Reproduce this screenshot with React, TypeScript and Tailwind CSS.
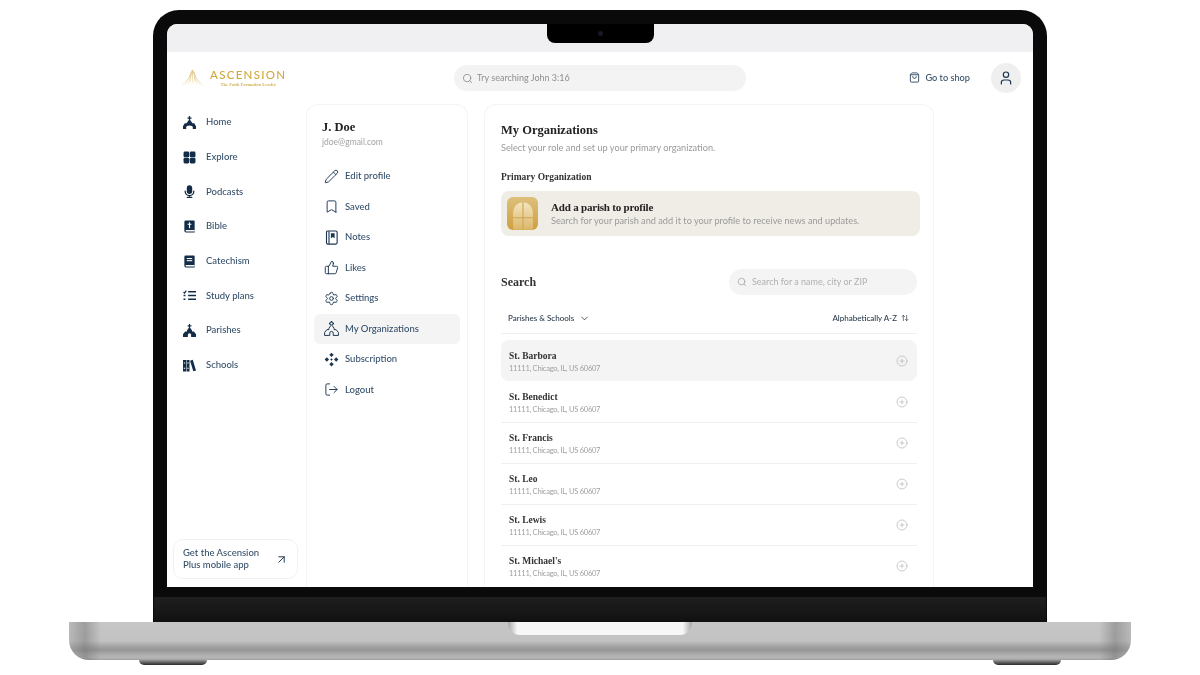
import React from 'react';
import { ArrowUpDown, ArrowUpRight, Bookmark, ChevronDown, CirclePlus, LogOut, Pencil, Search, Settings, ShoppingBag, ThumbsUp, User } from 'lucide-react';

type IconProps = { className?: string };

const churchPath = 'M10.900 0h2.200v2.400h2.400v2.100h-2.400V7l3.400 4.500V14h3.500l4 5v5h-9v-4a3 3 0 0 0-6 0v4H0v-5l4-5h3.500v-2.500L10.900 7V4.500H8.500V2.400h2.400z';

const HomeIcon = ({ className }: IconProps) => (
    <svg viewBox="0 0 24 24" fill="currentColor" className={className}>
        <path d="M10.800 0h2.400v2.600h2.600v2.300h-2.600v2.400l4.300 6.200h3.200l3.300 5.200V24h-6v-3.600a2.100 2.100 0 0 0-1.600-2.100L12 17.700l-4.400.6A2.100 2.100 0 0 0 6 20.400V24H0v-5.300l3.300-5.200h3.200l4.300-6.200V4.900H8.200V2.600h2.600z" />
    </svg>
);

const GridIcon = ({ className }: IconProps) => (
    <svg viewBox="0 0 24 24" fill="currentColor" className={className}>
        <rect x="1" y="1" width="10.500" height="10.500" rx="2.500" />
        <rect x="12.500" y="1" width="10.500" height="10.500" rx="2.500" />
        <rect x="1" y="12.500" width="10.500" height="10.500" rx="2.500" />
        <rect x="12.500" y="12.500" width="10.500" height="10.500" rx="2.500" />
    </svg>
);

const MicIcon = ({ className }: IconProps) => (
    <svg viewBox="0 0 24 24" className={className}>
        <rect x="7" y="0.500" width="10" height="16" rx="5" fill="currentColor" />
        <path d="M4 11.500a8 8 0 0 0 16 0M12 19.500V23M8 23h8" fill="none" stroke="currentColor" strokeWidth="2.400" strokeLinecap="round" />
    </svg>
);

const BibleIcon = ({ className }: IconProps) => (
    <svg viewBox="0 0 24 24" className={className}>
        <path d="M5 1h15a1.500 1.500 0 0 1 1.500 1.500V23H5.500A3 3 0 0 1 2.500 20V3.500A2.500 2.500 0 0 1 5 1z" fill="currentColor" />
        <path d="M6 18.500h15.500V21H6a1.250 1.250 0 0 1 0-2.500z" fill="#fff" />
        <path d="M11 4h2v2.800h2.500v2H13V15h-2V8.800H8.500v-2H11z" fill="#fff" />
    </svg>
);

const CatechismIcon = ({ className }: IconProps) => (
    <svg viewBox="0 0 24 24" className={className}>
        <path d="M5 1h15a1.500 1.500 0 0 1 1.500 1.500V23H5.500A3 3 0 0 1 2.500 20V3.500A2.500 2.500 0 0 1 5 1z" fill="currentColor" />
        <path d="M6 18.500h15.500V21H6a1.250 1.250 0 0 1 0-2.500z" fill="#fff" />
        <rect x="7" y="5.500" width="10" height="2" fill="#fff" />
        <rect x="7" y="9.500" width="10" height="2" fill="#fff" />
    </svg>
);

const PlansIcon = ({ className }: IconProps) => (
    <svg viewBox="0 0 24 24" fill="none" stroke="currentColor" className={className}>
        <path d="M1 5.500l2 2 3-4.500" strokeWidth="2.200" />
        <path d="M9.500 5H24M9.500 12H24M9.500 19H24" strokeWidth="3" />
        <path d="M1 12h3.500M1 19h3.500" strokeWidth="3" />
    </svg>
);

const ParishIcon = ({ className }: IconProps) => (
    <svg viewBox="0 0 24 24" fill="currentColor" className={className}>
        <path d={churchPath} />
    </svg>
);

const BooksIcon = ({ className }: IconProps) => (
    <svg viewBox="0 0 24 24" fill="currentColor" className={className}>
        <path fillRule="evenodd" d="M0 2h5.500v21H0zM1.500 6.500v2h2.500v-2zM1.500 16v2h2.500v-2zM6.500 2h5.500v21H6.500zM8 6.500v2h2.500v-2zM8 16v2h2.500v-2z" />
        <path fillRule="evenodd" d="M13 3.200L18 1.500 24 21l-5 1.700z" />
    </svg>
);

const NotesIcon = ({ className }: IconProps) => (
    <svg viewBox="0 0 24 24" className={className}>
        <rect x="4" y="1.500" width="17" height="21" rx="2" fill="none" stroke="currentColor" strokeWidth="1.800" />
        <path d="M8 2v20" stroke="currentColor" strokeWidth="1.800" />
        <path d="M11 5h6v8l-3-2-3 2z" fill="currentColor" />
    </svg>
);

const OrgIcon = ({ className }: IconProps) => (
    <svg viewBox="-1 -1 26 26" fill="none" stroke="currentColor" strokeWidth="1.700" strokeLinejoin="round" className={className}>
        <path d={churchPath} />
    </svg>
);

const SparkleIcon = ({ className }: IconProps) => (
    <svg viewBox="0 0 24 24" fill="currentColor" className={className}>
        <path d="M12 1l3.500 3.500L12 8 8.500 4.500zM12 16l3.500 3.500L12 23l-3.500-3.500zM4.500 8.500L8 12l-3.500 3.500L1 12zM19.500 8.500L23 12l-3.500 3.500L16 12z" />
        <path d="M12 10l2 2-2 2-2-2z" />
    </svg>
);

const sideLinks = [
    { label: 'Home', Icon: HomeIcon },
    { label: 'Explore', Icon: GridIcon },
    { label: 'Podcasts', Icon: MicIcon },
    { label: 'Bible', Icon: BibleIcon },
    { label: 'Catechism', Icon: CatechismIcon },
    { label: 'Study plans', Icon: PlansIcon },
    { label: 'Parishes', Icon: ParishIcon },
    { label: 'Schools', Icon: BooksIcon },
];

const profileLinks = [
    { label: 'Edit profile', Icon: Pencil },
    { label: 'Saved', Icon: Bookmark },
    { label: 'Notes', Icon: NotesIcon },
    { label: 'Likes', Icon: ThumbsUp },
    { label: 'Settings', Icon: Settings },
    { label: 'My Organizations', Icon: OrgIcon, active: true },
    { label: 'Subscription', Icon: SparkleIcon },
    { label: 'Logout', Icon: LogOut },
];

const parishes = ['St. Barbora', 'St. Benedict', 'St. Francis', 'St. Leo', 'St. Lewis', "St. Michael's"];

const Logo = () => (
    <div className="flex w-[273px] items-center gap-[6px]">
        <svg viewBox="0 0 46 36" className="h-[18px] w-[23px]" fill="none" strokeWidth="1.400">
            <defs>
                <linearGradient id="rays" x1="0" y1="0" x2="0" y2="1">
                    <stop offset="0" stopColor="#d9bb70" />
                    <stop offset="1" stopColor="#f6eeda" />
                </linearGradient>
            </defs>
            <path stroke="url(#rays)" d="M23 2Q18 20 1 34M21 6Q16 22 7 32M23 2Q20 18 14 30M23 2V28M25 6Q27 18 32 30M23 2Q28 20 45 34M25 6Q30 22 39 32M19 10V26M27 10V26" />
        </svg>
        <div className="flex flex-col items-center">
            <span className="text-[11.500px] font-medium leading-[11px] tracking-[1.300px] text-[#cfa93f] font-['Lato',sans-serif]">ASCENSION</span>
            <span className="mt-[2px] text-[4.500px] font-bold leading-[5px] text-[#d3b25a] font-['Liberation_Serif',serif]">The Faith Formation Leader</span>
        </div>
    </div>
);

const Header = () => (
    <div className="flex h-[52px] shrink-0 items-center pl-[14px] pr-[12px]">
        <Logo />
        <div className="flex h-[26px] w-[292px] items-center gap-[4px] rounded-full bg-[#f3f3f3] pl-[8px] text-[9px] text-[#8f8f8f]">
            <Search className="h-[11px] w-[11px] text-[#777]" strokeWidth={1.500} />
            <span>Try searching John 3:16</span>
        </div>
        <div className="ml-auto flex items-center gap-[5px] text-[9.200px] font-medium text-[#36506b]">
            <ShoppingBag className="h-[11px] w-[11px] text-[#1c3550]" strokeWidth={1.800} />
            <span>Go to shop</span>
        </div>
        <div className="ml-[21px] flex h-[30px] w-[30px] items-center justify-center rounded-full bg-[#efefef]">
            <User className="h-[16px] w-[16px] text-[#1c3550]" strokeWidth={1.800} />
        </div>
    </div>
);

const Sidebar = () => (
    <div className="flex w-[139px] shrink-0 flex-col pl-[6px] pt-[1px]">
        {sideLinks.map(({ label, Icon }) => (
            <div key={label} className="flex h-[34.700px] shrink-0 items-center gap-[10px] pl-[10px] text-[9.500px] font-medium text-[#36506b]">
                <Icon className="h-[13px] w-[13px] text-[#132c47]" />
                <span>{label}</span>
            </div>
        ))}
        <div className="mb-[8px] mt-auto flex h-[40px] w-[125px] items-center justify-between rounded-[10px] border border-[#f1f1f1] pl-[9px] pr-[9px] text-[9.500px] font-medium leading-[12px] text-[#36506b]">
            <span>Get the Ascension<br />Plus mobile app</span>
            <ArrowUpRight className="h-[13px] w-[13px] text-[#1c3550]" strokeWidth={1.800} />
        </div>
    </div>
);

const ProfilePanel = () => (
    <div className="w-[162px] shrink-0 rounded-t-[12px] border border-b-0 border-[#f4f4f4] px-[7px] pt-[14px]">
        <div className="pl-[8px]">
            <div className="text-[12.500px] font-bold leading-[17px] text-[#222] font-['Liberation_Serif',serif]">J. Doe</div>
            <div className="text-[8.500px] leading-[13px] text-[#a3a3a3]">jdoe@gmail.com</div>
        </div>
        <div className="mt-[12px] flex flex-col">
            {profileLinks.map(({ label, Icon, active }) => (
                <div key={label} className={`flex h-[30.500px] items-center gap-[6px] rounded-[6px] pl-[10px] text-[9.500px] font-medium text-[#36506b] ${active ? 'bg-[#f4f4f4]' : ''}`}>
                    <Icon className="h-[15px] w-[15px] text-[#1c3550]" strokeWidth={1.500} />
                    <span>{label}</span>
                </div>
            ))}
        </div>
    </div>
);

const ParishBanner = () => (
    <div className="mr-[-3px] mt-[7px] flex h-[45px] items-center rounded-[8px] bg-[#f0ede6] pl-[6px]">
        <div className="flex h-[33px] w-[31px] items-end justify-center rounded-[6px] bg-gradient-to-b from-[#dcc07c] to-[#cf9f3c]">
            <svg viewBox="0 0 20 26" className="h-[29px] w-[22px]">
                <defs>
                    <linearGradient id="pane" x1="0" y1="0" x2="0" y2="1">
                        <stop offset="0" stopColor="#f3e4bf" />
                        <stop offset="1" stopColor="#dcb76a" />
                    </linearGradient>
                </defs>
                <path d="M1 26V10a9 9 0 0 1 18 0v16z" fill="url(#pane)" />
                <path d="M10 1v25M1 15h18" stroke="#cfa552" strokeWidth="1" />
            </svg>
        </div>
        <div className="ml-[13px]">
            <div className="text-[11px] font-bold leading-[14px] tracking-[-0.200px] text-[#222] font-['Liberation_Serif',serif]">Add a parish to profile</div>
            <div className="text-[9.200px] leading-[14px] text-[#9a9a9a]">Search for your parish and add it to your profile to receive news and updates.</div>
        </div>
    </div>
);

const MainCard = () => (
    <div className="ml-[16px] w-[450px] shrink-0 rounded-t-[12px] border border-b-0 border-[#f4f4f4] px-[16px] pt-[17px]">
        <div className="text-[12.500px] font-bold leading-[17px] text-[#222] font-['Liberation_Serif',serif]">My Organizations</div>
        <div className="mt-[2px] text-[9.200px] leading-[13px] text-[#9a9a9a]">Select your role and set up your primary organization.</div>
        <div className="mt-[17px] text-[9.500px] font-bold leading-[13px] text-[#333] font-['Liberation_Serif',serif]">Primary Organization</div>
        <ParishBanner />
        <div className="mt-[33px] flex items-center justify-between">
            <span className="text-[12px] font-bold text-[#333] font-['Liberation_Serif',serif]">Search</span>
            <div className="flex h-[26px] w-[188px] items-center gap-[5px] rounded-full bg-[#f4f4f4] pl-[8px] text-[9px] text-[#b0b0b0]">
                <Search className="h-[10px] w-[10px] text-[#999]" strokeWidth={1.600} />
                <span>Search for a name, city or ZIP</span>
            </div>
        </div>
        <div className="mt-[11px] flex h-[28px] items-center justify-between border-b border-[#efefef] pb-[3px] pl-[7px] pr-[8px] text-[8px] font-medium text-[#2b3a4a]">
            <div className="flex items-center gap-[5px]">
                <span>Parishes &amp; Schools</span>
                <ChevronDown className="h-[11px] w-[11px]" strokeWidth={1.800} />
            </div>
            <div className="flex items-center gap-[4px]">
                <span>Alphabetically A-Z</span>
                <ArrowUpDown className="h-[8px] w-[8px]" strokeWidth={2} />
            </div>
        </div>
        <div className="mt-[6px]">
            {parishes.map((name, i) => (
                <div key={name} className={`flex h-[41px] items-center justify-between pl-[8px] pr-[9px] ${i === 0 ? 'rounded-[8px] bg-[#f4f4f4]' : i === 1 ? '' : 'border-t border-[#efefef]'}`}>
                    <div className="pt-[2px]">
                        <div className="text-[9.500px] font-bold leading-[13px] text-[#333] font-['Liberation_Serif',serif]">{name}</div>
                        <div className="text-[7.500px] leading-[11px] tracking-[-0.250px] text-[#a0a0a0]">11111, Chicago, IL, US 60607</div>
                    </div>
                    <CirclePlus className="h-[12px] w-[12px] text-[#b9b9b9]" strokeWidth={1.500} />
                </div>
            ))}
        </div>
    </div>
);

export default function App() {
    return (
        <div className="flex h-[675px] w-[1200px] flex-col items-center overflow-hidden bg-white pt-[10px] font-['Lato',sans-serif]">
            <div className="flex h-[612px] w-[894px] shrink-0 flex-col rounded-t-[26px] bg-[#0a0a0a] px-[14px] pt-[14px]">
                <div className="flex h-[563px] shrink-0 flex-col overflow-hidden rounded-t-[10px] bg-white blur-[0.400px]">
                    <div className="flex h-[28px] shrink-0 justify-center bg-[#f0f0f2]">
                        <div className="flex h-[19px] w-[107px] items-center justify-center rounded-b-[8px] bg-black">
                            <div className="h-[5px] w-[5px] rounded-full bg-[#161a22]" />
                        </div>
                    </div>
                    <Header />
                    <div className="flex min-h-0 flex-1">
                        <Sidebar />
                        <ProfilePanel />
                        <MainCard />
                    </div>
                </div>
                <div className="mx-[-13px] mt-[10px] h-[25px] shrink-0 bg-gradient-to-b from-[#1f1f1f] to-[#111111]" />
            </div>
            <div className="flex h-[38px] w-[1062px] shrink-0 justify-center rounded-b-[20px] bg-[linear-gradient(90deg,rgba(170,170,170,0.4)_0%,rgba(110,110,110,0.45)_1.500%,rgba(200,200,200,0)_3%,rgba(200,200,200,0)_97%,rgba(110,110,110,0.45)_98.500%,rgba(170,170,170,0.4)_100%),linear-gradient(180deg,#c6c6c6_0%,#c2c2c2_50%,#a0a0a0_66%,#969696_74%,#aeaeae_86%,#b6b6b6_94%,#a0a0a0_100%)]">
                <div className="h-[13px] w-[184px] rounded-b-[12px] bg-[linear-gradient(90deg,#a8a8a8_0%,#f7f7f7_5%,#f7f7f7_95%,#a8a8a8_100%)]" />
            </div>
            <div className="flex w-[922px] shrink-0 justify-between">
                <div className="h-[5px] w-[68px] rounded-b-[6px] bg-gradient-to-b from-[#9a9a9a] to-[#2a2a2a]" />
                <div className="h-[5px] w-[68px] rounded-b-[6px] bg-gradient-to-b from-[#9a9a9a] to-[#2a2a2a]" />
            </div>
        </div>
    );
}
